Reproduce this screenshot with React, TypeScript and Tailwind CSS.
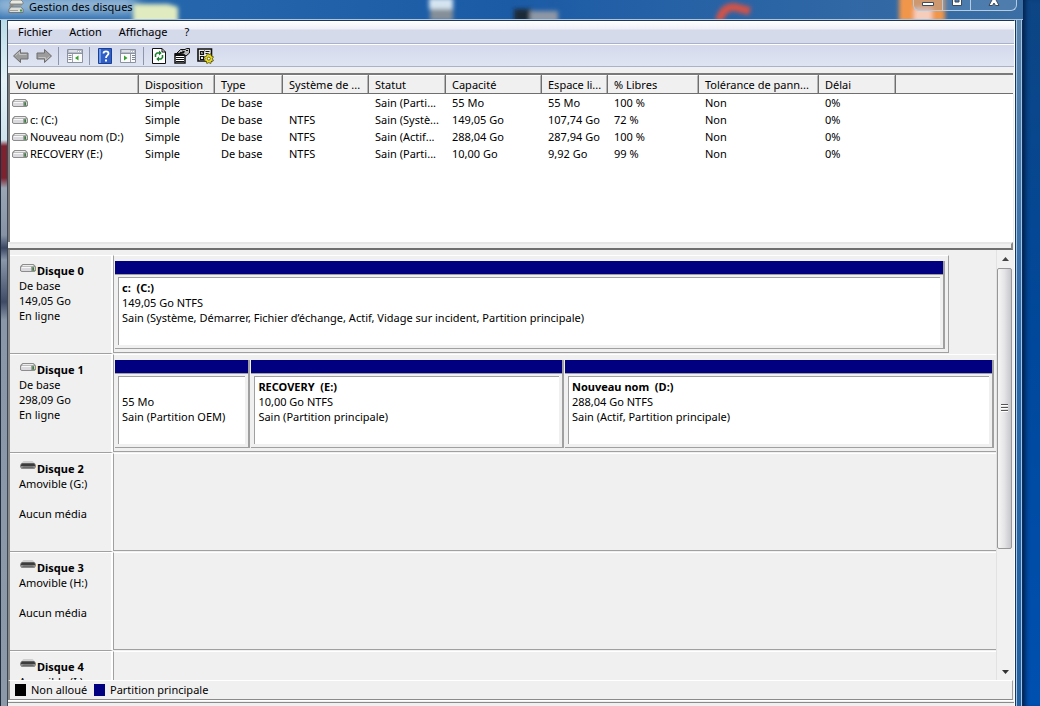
import type { ReactNode } from 'react';

interface Volume {
  name: string;
  status: string;
  fileSystem: string;
  capacity: string;
  free: string;
  percent: string;
}

interface Partition {
  title: string;
  size: string;
  status: string;
  weight: number;
}

interface Disk {
  name: string;
  lines: string[];
  removable: boolean;
  partitions: Partition[];
  short?: boolean;
}

const COLUMNS = [
  { label: 'Volume', width: 'w-[129px]' },
  { label: 'Disposition', width: 'w-[76px]' },
  { label: 'Type', width: 'w-[68px]' },
  { label: 'Système de ...', width: 'w-[86px]' },
  { label: 'Statut', width: 'w-[77px]' },
  { label: 'Capacité', width: 'w-[96px]' },
  { label: 'Espace li...', width: 'w-[66px]' },
  { label: '% Libres', width: 'w-[91px]' },
  { label: 'Tolérance de pann...', width: 'w-[120px]' },
  { label: 'Délai', width: 'w-[77px]' },
];

const VOLUMES: Volume[] = [
  { name: '', status: 'Sain (Parti...', fileSystem: '', capacity: '55 Mo', free: '55 Mo', percent: '100 %' },
  { name: 'c: (C:)', status: 'Sain (Systè...', fileSystem: 'NTFS', capacity: '149,05 Go', free: '107,74 Go', percent: '72 %' },
  { name: 'Nouveau nom (D:)', status: 'Sain (Actif...', fileSystem: 'NTFS', capacity: '288,04 Go', free: '287,94 Go', percent: '100 %' },
  { name: 'RECOVERY (E:)', status: 'Sain (Parti...', fileSystem: 'NTFS', capacity: '10,00 Go', free: '9,92 Go', percent: '99 %' },
];

const DISKS: Disk[] = [
  {
    name: 'Disque 0',
    lines: ['De base', '149,05 Go', 'En ligne'],
    removable: false,
    short: true,
    partitions: [
      {
        title: 'c:  (C:)',
        size: '149,05 Go NTFS',
        status: 'Sain (Système, Démarrer, Fichier d’échange, Actif, Vidage sur incident, Partition principale)',
        weight: 830,
      },
    ],
  },
  {
    name: 'Disque 1',
    lines: ['De base', '298,09 Go', 'En ligne'],
    removable: false,
    partitions: [
      { title: '', size: '55 Mo', status: 'Sain (Partition OEM)', weight: 134 },
      { title: 'RECOVERY  (E:)', size: '10,00 Go NTFS', status: 'Sain (Partition principale)', weight: 312 },
      { title: 'Nouveau nom  (D:)', size: '288,04 Go NTFS', status: 'Sain (Actif, Partition principale)', weight: 429 },
    ],
  },
  { name: 'Disque 2', lines: ['Amovible (G:)', '', 'Aucun média'], removable: true, partitions: [] },
  { name: 'Disque 3', lines: ['Amovible (H:)', '', 'Aucun média'], removable: true, partitions: [] },
  { name: 'Disque 4', lines: ['Amovible (I:)'], removable: true, partitions: [] },
];

function DriveIcon() {
  return (
    <svg width="16" height="10" viewBox="0 0 16 10" className="shrink-0" aria-hidden="true">
      <path d="M2.500 1h11L16 3.500v4L14.500 9h-13L0 7.500v-4z" fill="#8c8c8c" />
      <path d="M3 2h10l1.500 1.500h-13z" fill="#ececec" />
      <path d="M1 4h10.500v4H2L1 7.500z" fill="#dadade" />
      <path d="M2 4h9v1H2z" fill="#f7f7f7" />
      <path d="M11.500 3.500H15v4L14 8.500h-2.500z" fill="#8d9a8e" />
      <path d="M12.500 4.500H14v3h-1.500z" fill="#3c7a42" />
      <path d="M14 4h1v3h-1z" fill="#c8dcc9" />
    </svg>
  );
}

function RemovableIcon() {
  return (
    <svg width="16" height="10" viewBox="0 0 16 10" className="shrink-0" aria-hidden="true">
      <path d="M3.500 0h9L15 2.500H1z" fill="#cfcfcf" />
      <path d="M1.500 2h13L16 4v2l-1.500 2h-13L0 6V4z" fill="#8a8a8a" />
      <path d="M2 2.500h12l1 1.500v1H1V4z" fill="#3c3c3c" />
      <path d="M3.500 5.500h9L14 7H2z" fill="#6b6b6b" />
    </svg>
  );
}

function ArrowIcon({ flip }: { flip?: boolean }) {
  return (
    <svg width="18" height="16" viewBox="0 0 18 16" className={flip ? 'rotate-180' : ''} aria-hidden="true">
      <path d="M1.500 8 8.500 1.500v3.500h7.500v6H8.500v3.500z" fill="#9c9c9c" stroke="#6e6e6e" strokeLinejoin="round" />
      <path d="M3.500 7.500 7.500 4v2.500h7" fill="none" stroke="#c4c4c4" />
    </svg>
  );
}

function PaneIcon({ right }: { right?: boolean }) {
  return (
    <svg width="16" height="14" viewBox="0 0 16 14" aria-hidden="true">
      <path d="M.5.5h15v13H.5z" fill="#fbfbfb" stroke="#8b93a0" />
      <path d="M1 1h14v3H1z" fill="#b6bdc9" />
      <path d="M2 2h8M11 2.500h1M13 2.500h1" stroke="#fff" />
      <path d="M0 4.500h16" stroke="#8b93a0" />
      {right ? (
        <>
          <path d="M10.500 5v8" stroke="#9aa2ae" />
          <path d="M12 6.500h3M12 8.500h3M12 10.500h3" stroke="#7b8594" />
          <path d="M4 6.500v5L7.500 9z" fill="#38a131" />
        </>
      ) : (
        <>
          <path d="M5.500 5v8" stroke="#9aa2ae" />
          <path d="M1.500 6.500h3M1.500 8.500h3M1.500 10.500h3" stroke="#7b8594" />
          <path d="M11.500 6.500v5L8 9z" fill="#38a131" />
        </>
      )}
    </svg>
  );
}

function HelpIcon() {
  return (
    <svg width="14" height="16" viewBox="0 0 14 16" aria-hidden="true">
      <path d="M.5.5h13v15H.5z" fill="#2f5fc6" stroke="#1c3f96" />
      <path d="M1 1h2v14H1z" fill="#6f9be6" />
      <path d="M5.500 5.500C5.500 2.700 10.500 2.700 10.500 5.500 10.500 7.400 8 7.600 8 10" fill="none" stroke="#fff" strokeWidth="1.800" />
      <path d="M7 11.500h2v2H7z" fill="#fff" />
    </svg>
  );
}

function RefreshIcon() {
  return (
    <svg width="14" height="16" viewBox="0 0 14 16" aria-hidden="true">
      <path d="M.5.5H10L13.500 4v11.500H.5z" fill="#fff" stroke="#111" />
      <path d="M10 .5V4h3.500" fill="none" stroke="#111" />
      <path d="M3.500 9V6.500L5 5h2M10.500 7v2.500L9 11H7" fill="none" stroke="#16802b" strokeWidth="1.500" />
      <path d="M7 2.500v5L9.700 5zM7 8.500v5L4.300 11z" fill="#16802b" />
    </svg>
  );
}

function PropertiesIcon() {
  return (
    <svg width="16" height="16" viewBox="0 0 16 16" aria-hidden="true">
      <path d="M1 6h10v9H1z" fill="#fff" stroke="#111" strokeWidth="1.500" />
      <path d="M1 5h10v3H1z" fill="#111" />
      <path d="M2 9.500h8M2 11.500h8M2 13.500h8" stroke="#111" />
      <path d="M3 5 6.500 1.500H11l1.500-1H15.500V5L12 8 9.500 6z" fill="#b9b9b9" stroke="#111" />
      <path d="M6 4.500h4M8 3l3 1M12 2.500h2" stroke="#111" />
    </svg>
  );
}

function SettingsIcon() {
  return (
    <svg width="17" height="16" viewBox="0 0 17 16" aria-hidden="true">
      <path d="M1 1h13.500v12H1z" fill="#ececec" stroke="#111" strokeWidth="1.600" />
      <path d="M3.500 3.500h3v3h-3zM3.500 8.500h3v3h-3z" fill="#fff" stroke="#111" strokeWidth="1.200" />
      <path d="M4 4.500 5 5.500 7.500 2.500" fill="none" stroke="#111" />
      <path d="M8.500 3.500h4M8.500 5.500h3" stroke="#111" strokeWidth="1.200" />
      <path d="m10.500 5 1.300 1.600 2.200-.8.300 2.200 2.200.8-1.200 1.900 1.200 2-2.200.6-.5 2.200-2-.9-2 .9-.5-2.200-2.300-.6 1.200-2-.9-2 2.200-.5z" fill="#eade20" stroke="#3a3500" strokeWidth=".7" />
      <circle cx="11.800" cy="10.600" r="1.500" fill="#fff" stroke="#3a3500" strokeWidth=".7" />
    </svg>
  );
}

function TitleIcon() {
  return (
    <svg width="16" height="16" viewBox="0 0 16 16" aria-hidden="true">
      <path d="M4 1h9l2 2v2H2V3z" fill="#e9e9e4" stroke="#77776f" strokeWidth=".8" />
      <path d="M2 5h12v1.500H6L3 8.500H1z" fill="#8c8c86" />
      <path d="M3.500 8h9L15 10v3.500H1V10z" fill="#deded9" stroke="#66665f" strokeWidth=".8" />
      <path d="M2 11.500h8" stroke="#a0a09c" />
      <path d="M12 10.500h2v2h-2z" fill="#3c9446" />
    </svg>
  );
}

/* Desktop shortcuts showing through the glass of the caption */
function GlassBackdrop() {
  return (
    <svg className="absolute inset-0 h-full w-full" aria-hidden="true">
      <defs>
        <filter id="frost" x="-30%" y="-60%" width="160%" height="220%">
          <feGaussianBlur stdDeviation="2" />
        </filter>
        <filter id="glow" x="-30%" y="-60%" width="160%" height="220%">
          <feGaussianBlur stdDeviation="6" />
        </filter>
      </defs>
      <rect x="-6" y="-4" width="142" height="18" fill="#a3c3de" opacity=".9" filter="url(#glow)" />
      <g filter="url(#frost)">
        <path d="M133 4h35l10 3v20h-45z" fill="#e0ebc0" />
        <path d="M429-2h24V9h-24z" fill="#d5e4f0" />
        <path d="M430 9h23v12h-23z" fill="#858f99" />
        <path d="M514 9h18v14h-18z" fill="#1f2937" />
        <path d="M530 11h28v12h-28z" fill="#8e97a5" />
        <path d="M719 22q3-15 15-15l16 4" fill="none" stroke="#d0524a" strokeWidth="8" />
        <path d="M899-4h46v28h-46z" fill="#f0964c" />
        <path d="M914 8h18v14h-18z" fill="#f6cdbb" />
      </g>
    </svg>
  );
}

function CaptionButtons() {
  return (
    <div className="relative flex h-[11px] w-[104px] overflow-hidden rounded-b-md border border-t-0 border-[#b5cbe0] bg-[#7fa0c4]/30">
      <button type="button" aria-label="Réduire" className="flex w-[29px] justify-center border-r border-[#b5cbe0]">
        <svg width="14" height="8" viewBox="0 0 14 8"><path d="M1.500 2.500h11v3h-11z" fill="#fff" stroke="#3d4a5c" /></svg>
      </button>
      <button type="button" aria-label="Agrandir" className="flex w-[28px] justify-center border-r border-[#b5cbe0]">
        <svg width="12" height="8" viewBox="0 0 12 8"><path d="M1.500-3v8.500h9V-3H8v5H4v-5z" fill="#fff" stroke="#3d4a5c" /></svg>
      </button>
      <button type="button" aria-label="Fermer" className="flex flex-1 justify-center">
        <svg width="14" height="8" viewBox="0 0 14 8"><path d="M2 5.500 5.500-1h3L12 5.500H8.500L7 3 5.500 5.500z" fill="#fff" stroke="#3d4a5c" /></svg>
      </button>
    </div>
  );
}

function ToolButton({ label, children }: { label: string; children: ReactNode }) {
  return (
    <button type="button" aria-label={label} className="flex w-[23px] items-center justify-center">
      {children}
    </button>
  );
}

function Separator() {
  return <span className="mx-[3px] h-[18px] w-px bg-[#8e96ab]" />;
}

function VolumeTable() {
  return (
    <div className="h-[169px] shrink-0 border-t-2 border-l-2 border-[#7a7a7a] bg-white">
      <table className="w-full table-fixed border-separate border-spacing-0 text-left leading-[17px] whitespace-nowrap">
        <colgroup>
          {COLUMNS.map((column) => (
            <col key={column.label} className={column.width} />
          ))}
          <col />
        </colgroup>
        <thead>
          <tr className="h-[19px] bg-[#f0f0f0]">
            {COLUMNS.map((column) => (
              <th key={column.label} scope="col" className="border-r border-b border-[#6f6f6f] p-0 font-normal">
                <div className="border-t border-r border-t-white border-r-[#b5b5b5] pl-1.5">{column.label}</div>
              </th>
            ))}
            <td className="border-b border-[#6f6f6f] p-0" />
          </tr>
        </thead>
        <tbody>
          {VOLUMES.map((volume) => (
            <tr key={volume.name} className="h-[17px]">
              <td className="p-0 pl-0.5">
                <span className="flex h-[17px] items-center gap-0.5">
                  <DriveIcon />
                  {volume.name}
                </span>
              </td>
              <td className="p-0 pl-1.5">Simple</td>
              <td className="p-0 pl-1.5">De base</td>
              <td className="p-0 pl-1.5">{volume.fileSystem}</td>
              <td className="p-0 pl-1.5">{volume.status}</td>
              <td className="p-0 pl-1.5">{volume.capacity}</td>
              <td className="p-0 pl-1.5">{volume.free}</td>
              <td className="p-0 pl-1.5">{volume.percent}</td>
              <td className="p-0 pl-1.5">Non</td>
              <td className="p-0 pl-1.5">0%</td>
              <td className="p-0" />
            </tr>
          ))}
        </tbody>
      </table>
    </div>
  );
}

function PartitionBlock({ partition }: { partition: Partition }) {
  return (
    <div
      className="flex min-w-0 basis-0 flex-col border-r-2 border-b border-[#a0a0a0] bg-[#f0f0f0]"
      style={{ flexGrow: partition.weight }}
    >
      <div className="h-[13px] bg-[#000080]" />
      <div className="flex-1 border-t border-[#a0a0a0] p-[3px] pt-[2px]">
        <div className="h-full border-t border-l border-[#a0a0a0] bg-white px-[3px] pt-[2px] leading-[15px] whitespace-pre">
          <p className="h-[15px] font-bold">{partition.title}</p>
          <p>{partition.size}</p>
          <p>{partition.status}</p>
        </div>
      </div>
    </div>
  );
}

function DiskRow({ disk }: { disk: Disk }) {
  return (
    <div className="flex h-[99px] shrink-0">
      <div className="w-[103px] shrink-0 border-t border-r-2 border-b border-t-white border-r-white border-b-[#a0a0a0] pt-[7px] pl-[9px] leading-[15px]">
        <p className="flex h-[15px] items-start gap-px pl-px font-bold">
          {disk.removable ? <RemovableIcon /> : <DriveIcon />}
          {disk.name}
        </p>
        {disk.lines.map((line, index) => (
          <p key={index} className="h-[15px]">{line}</p>
        ))}
      </div>
      <div
        className={`mb-px flex min-w-0 flex-1 border-t border-b border-l border-t-white border-b-[#a0a0a0] border-l-[#a0a0a0] pt-[5px] pb-[3px] pl-px ${
          disk.short ? 'mr-[47px] border-r border-r-[#a0a0a0] pr-[3px]' : 'pr-[2px]'
        }`}
      >
        <div className="flex flex-1 gap-px">
          {disk.partitions.map((partition) => (
            <PartitionBlock key={partition.size} partition={partition} />
          ))}
        </div>
      </div>
    </div>
  );
}

function ScrollBar() {
  return (
    <div className="flex w-[17px] shrink-0 flex-col border-l border-[#e2e2e2] bg-[#f1f1f1]">
      <button type="button" aria-label="Défiler vers le haut" className="flex h-[18px] items-center justify-center">
        <svg width="7" height="4" viewBox="0 0 7 4"><path d="M3.500 0 7 4H0z" fill="#444" /></svg>
      </button>
      <div className="mr-px flex flex-[281] flex-col items-center justify-center gap-px rounded-[2px] border border-[#979797] bg-linear-to-r from-[#f6f6f6] via-[#e4e4e6] to-[#c6c7cc]">
        <span className="h-[2px] w-[7px] border-b border-white bg-[#555]" />
        <span className="h-[2px] w-[7px] border-b border-white bg-[#555]" />
        <span className="h-[2px] w-[7px] border-b border-white bg-[#555]" />
      </div>
      <div className="flex-[115]" />
      <button type="button" aria-label="Défiler vers le bas" className="flex h-[17px] items-center justify-center">
        <svg width="7" height="4" viewBox="0 0 7 4"><path d="M0 0h7L3.500 4z" fill="#333" /></svg>
      </button>
    </div>
  );
}

export default function App() {
  return (
    <div className="flex h-screen w-full overflow-hidden bg-[#00479b] font-['Noto_Sans','Open_Sans',sans-serif] text-[11px] text-black">
      <div className="flex min-w-0 flex-1 flex-col">
        <header className="relative flex h-[20px] shrink-0 items-start border-b border-[#a8c4de] bg-linear-to-r from-[#2a6cae] via-[#1b5ba6] to-[#3a6ea4] pl-[8px]">
          <GlassBackdrop />
          <div className="relative flex h-[13px] flex-1 items-center gap-[5px]">
            <TitleIcon />
            <h1 className="leading-[13px]">Gestion des disques</h1>
          </div>
          <CaptionButtons />
          <span className="w-[6px]" />
        </header>

        <div className="flex min-h-0 flex-1">
          <div className="w-[8px] shrink-0 border-x border-l-[#1f2d3f] border-r-[#3c4652] bg-[linear-gradient(to_bottom,#b9dbe8_0px,#e4f2f6_60px,#cfe3ec_120px,#7d2330_126px,#7d2330_158px,#9ba6b4_168px,#8793a5_215px,#3a4663_228px,#8a97a9_240px,#3f4a66_282px,#8a97a8_300px,#8c99a9_100%)]" />
          <main className="flex min-w-0 flex-1 flex-col border-t border-r border-t-[#1e3553] border-r-white bg-[#f0f0f0]">
            <nav className="flex h-[23px] shrink-0 items-center gap-[17px] border-b border-[#a9b2c9] bg-[linear-gradient(to_bottom,#ffffff_0px,#eef0f8_8px,#d5daeb_9px,#d5daeb_100%)] pl-[10px]">
              <button type="button">Fichier</button>
              <button type="button">Action</button>
              <button type="button">Affichage</button>
              <button type="button">?</button>
            </nav>
            <div className="flex h-[23px] shrink-0 items-center border-t border-b border-t-white border-b-[#a9b2c9] bg-linear-to-b from-[#d4daec] to-[#dfe4f2] pl-px">
              <ToolButton label="Précédent"><ArrowIcon /></ToolButton>
              <ToolButton label="Suivant"><ArrowIcon flip /></ToolButton>
              <Separator />
              <span className="w-px" />
              <ToolButton label="Afficher l’arborescence"><PaneIcon /></ToolButton>
              <Separator />
              <ToolButton label="Aide"><HelpIcon /></ToolButton>
              <ToolButton label="Afficher le volet Actions"><PaneIcon right /></ToolButton>
              <span className="w-px" />
              <Separator />
              <ToolButton label="Actualiser"><RefreshIcon /></ToolButton>
              <ToolButton label="Propriétés"><PropertiesIcon /></ToolButton>
              <span className="w-px" />
              <ToolButton label="Paramètres"><SettingsIcon /></ToolButton>
            </div>

            <div className="flex min-h-0 flex-1 flex-col pt-[6px] pr-px">
              <VolumeTable />
              <div className="h-[8px] shrink-0 border-t-2 border-r-2 border-b-2 border-t-[#e6e6e6] border-r-[#8a8a8a] border-b-[#6f6f6f] bg-[#f0f0f0]" />
              <section className="flex min-h-0 flex-1 border-l-2 border-[#8a8a8a]">
                <div className="flex min-w-0 flex-1 flex-col overflow-hidden pt-[5px]">
                  {DISKS.map((disk) => (
                    <DiskRow key={disk.name} disk={disk} />
                  ))}
                </div>
                <ScrollBar />
              </section>
              <footer className="flex h-[20px] shrink-0 items-center border-t border-r border-b border-l-2 border-t-white border-r-[#a0a0a0] border-b-[#8a8a8a] border-l-[#8a8a8a] pl-[5px]">
                <span className="h-[12px] w-[11px] bg-black" />
                <span className="w-[68px] pl-[5px] whitespace-nowrap">Non alloué</span>
                <span className="h-[12px] w-[11px] bg-[#000080]" />
                <span className="pl-[5px]">Partition principale</span>
              </footer>
            </div>
            <div className="flex h-[6px] shrink-0 border-t border-white pt-px">
              <div className="flex-1 border-t border-[#8a8a8a]" />
            </div>
          </main>
          <div className="w-[8px] shrink-0 border-x border-l-[#17385f] border-r-[#0c2c57] bg-[#a3c6e6] px-px">
            <div className="h-full bg-linear-to-b from-[#5b84aa] via-[#2b68aa] to-[#22609f]" />
          </div>
        </div>
      </div>
      <aside className="w-[17px] shrink-0 bg-linear-to-b from-[#0d4584] via-[#00489c] to-[#0050b0] shadow-[inset_5px_0_5px_-3px_#001c44]" />
    </div>
  );
}
